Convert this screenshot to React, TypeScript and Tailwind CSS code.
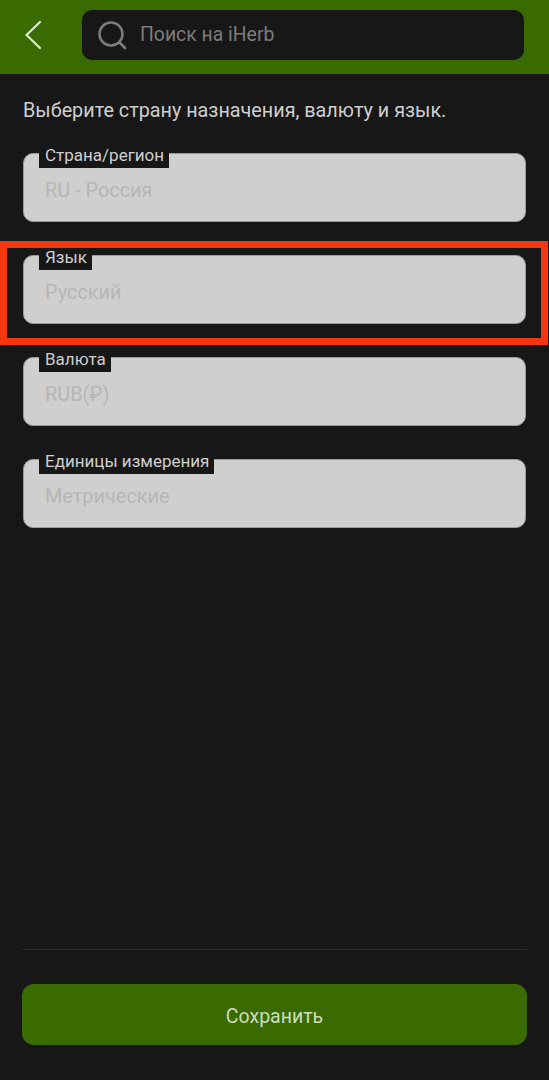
import React from 'react';

const fields = [
  { label: 'Страна/регион', value: 'RU - Россия', highlighted: false },
  { label: 'Язык', value: 'Русский', highlighted: true },
  { label: 'Валюта', value: 'RUB(₽)', highlighted: false },
  { label: 'Единицы измерения', value: 'Метрические', highlighted: false },
];

const Field: React.FC<{ label: string; value: string; highlighted: boolean }> = ({ label, value, highlighted }) => (
  <div className="relative h-[69px] rounded-[10px] bg-[#cfcfcf] border border-[#9a9a9a] pl-[21px] pt-[23px]">
    <span className="absolute left-[15px] -top-[5px] h-[19px] pl-[6px] pr-[5px] bg-[#171717] text-[#cfcfcf] text-[17px] leading-[13px] whitespace-nowrap">
      {label}
    </span>
    <span className="block text-[#b6b6b6] text-[19.9px] leading-[28px]">{value}</span>
    {highlighted && (
      <div className="absolute -left-[24px] -right-[23px] -top-[15px] -bottom-[22px] border-[7px] border-[#f6360f]" />
    )}
  </div>
);

const App: React.FC = () => {
  return (
    <div className="h-[1080px] w-[549px] flex flex-col bg-[#171717] overflow-hidden font-['Roboto',sans-serif]">
      <div className="h-[74px] shrink-0 bg-[#3a6b00] flex items-start pt-[10px] pr-[25px]">
        <div className="w-[82px] h-[50px] shrink-0 flex items-center pl-[24px]">
          <svg width="18" height="30" viewBox="0 0 18 30" fill="none" stroke="#dfe8d2" strokeWidth="2.2" strokeLinecap="round" strokeLinejoin="round">
            <path d="M16 2 L2.5 15 L16 28" />
          </svg>
        </div>
        <div className="flex-1 h-[50px] rounded-[10px] bg-[#171717] flex items-center pl-[15px] gap-[13px]">
          <svg width="30" height="30" viewBox="0 0 30 30" fill="none" stroke="#7c7c7c" strokeWidth="2.6" strokeLinecap="round">
            <circle cx="14" cy="14" r="11.5" />
            <path d="M22.5 22.5 L28 28" />
          </svg>
          <span className="text-[#7c7c7c] text-[19.4px] leading-none -mt-[1px]">Поиск на iHerb</span>
        </div>
      </div>

      <div className="flex-1 flex flex-col px-[23px]">
        <p className="mt-[24px] text-[#cfcfcf] text-[19.8px] leading-[26px] whitespace-nowrap">
          Выберите страну назначения, валюту и язык.
        </p>
        <div className="mt-[29px] flex flex-col gap-[33px]">
          {fields.map((f) => (
            <Field key={f.label} {...f} />
          ))}
        </div>
      </div>

      <div className="shrink-0 px-[22px] pb-[35px]">
        <div className="h-px bg-[#2b2b2b] mb-[34px]" />
        <div className="h-[61px] pt-[4px] rounded-[12px] bg-[#3a6b00] flex items-center justify-center text-[#cfdcbd] text-[19.5px]">
          Сохранить
        </div>
      </div>
    </div>
  );
};

export default App;
